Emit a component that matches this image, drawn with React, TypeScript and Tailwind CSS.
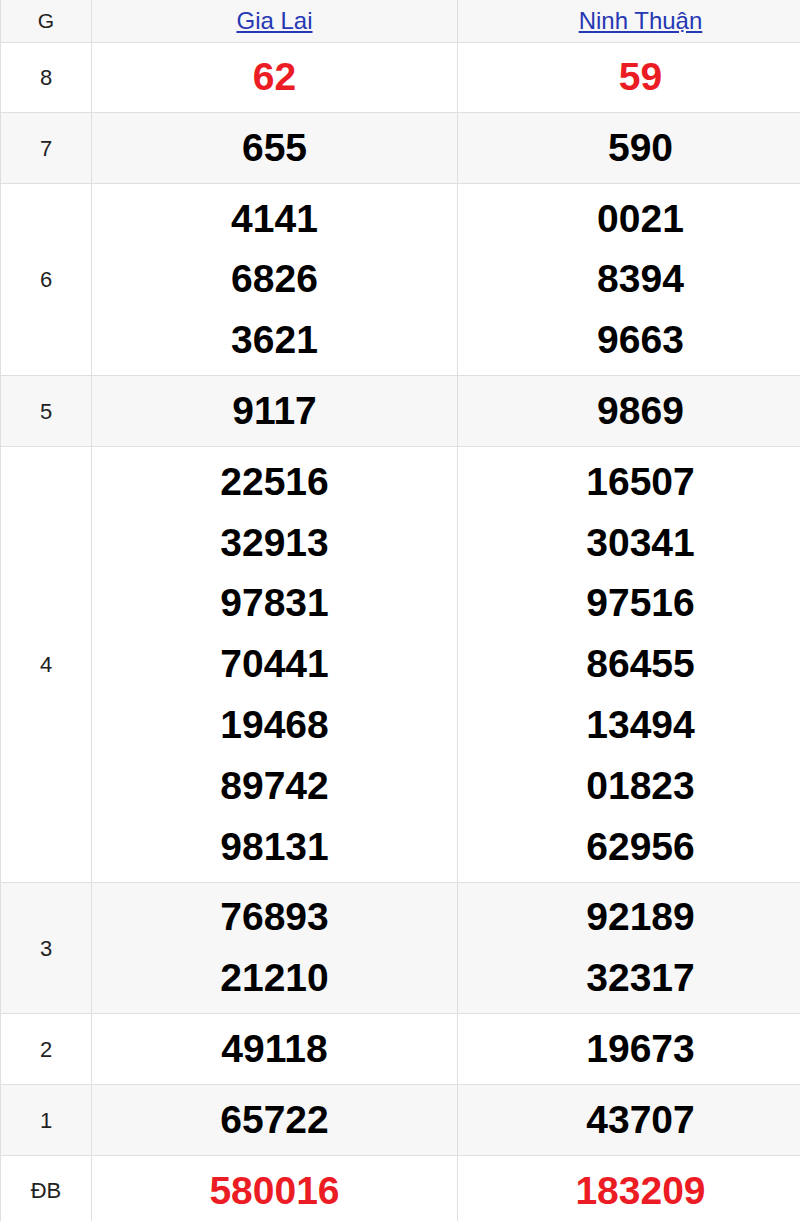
import React from 'react';

interface PrizeRow {
  label: string;
  gl: string[];
  nt: string[];
  red?: boolean;
}

const rows: PrizeRow[] = [
  { label: '8', gl: ['62'], nt: ['59'], red: true },
  { label: '7', gl: ['655'], nt: ['590'] },
  { label: '6', gl: ['4141', '6826', '3621'], nt: ['0021', '8394', '9663'] },
  { label: '5', gl: ['9117'], nt: ['9869'] },
  {
    label: '4',
    gl: ['22516', '32913', '97831', '70441', '19468', '89742', '98131'],
    nt: ['16507', '30341', '97516', '86455', '13494', '01823', '62956'],
  },
  { label: '3', gl: ['76893', '21210'], nt: ['92189', '32317'] },
  { label: '2', gl: ['49118'], nt: ['19673'] },
  { label: '1', gl: ['65722'], nt: ['43707'] },
  { label: 'ĐB', gl: ['580016'], nt: ['183209'], red: true },
];

const NumberCell: React.FC<{ values: string[]; red?: boolean }> = ({ values, red }) => (
  <td className="border border-[#dedfe3] py-[4.5px] text-center align-middle">
    {values.map((v) => (
      <div
        key={v}
        className={`text-[39px] font-bold leading-[60.8px] ${red ? 'text-[#ec1c24]' : 'text-black'}`}
      >
        {v}
      </div>
    ))}
  </td>
);

const App: React.FC = () => {
  return (
    <div className="w-[800px] overflow-hidden bg-white" style={{ fontFamily: '"Liberation Sans", Arial, sans-serif' }}>
      <table className="w-[823px] table-fixed border-collapse">
        <colgroup>
          <col className="w-[91px]" />
          <col className="w-[366px]" />
          <col className="w-[366px]" />
        </colgroup>
        <thead>
          <tr className="bg-[#f7f7f7]">
            <th className="h-[42px] border border-t-0 border-[#dedfe3] p-0 text-center align-middle text-[21px] font-normal text-[#222]">
              G
            </th>
            <th className="h-[42px] border border-t-0 border-[#dedfe3] p-0 text-center align-middle text-[24px] font-normal">
              <a href="#" className="text-[#2638b4] underline">Gia Lai</a>
            </th>
            <th className="h-[42px] border border-t-0 border-[#dedfe3] p-0 text-center align-middle text-[24px] font-normal">
              <a href="#" className="text-[#2638b4] underline">Ninh Thuận</a>
            </th>
          </tr>
        </thead>
        <tbody>
          {rows.map((r, i) => (
            <tr key={r.label} className={i % 2 === 1 ? 'bg-[#f7f7f7]' : 'bg-white'}>
              <td className="border border-[#dedfe3] text-center align-middle text-[22px] text-[#222]">
                {r.label}
              </td>
              <NumberCell values={r.gl} red={r.red} />
              <NumberCell values={r.nt} red={r.red} />
            </tr>
          ))}
        </tbody>
      </table>
    </div>
  );
};

export default App;
